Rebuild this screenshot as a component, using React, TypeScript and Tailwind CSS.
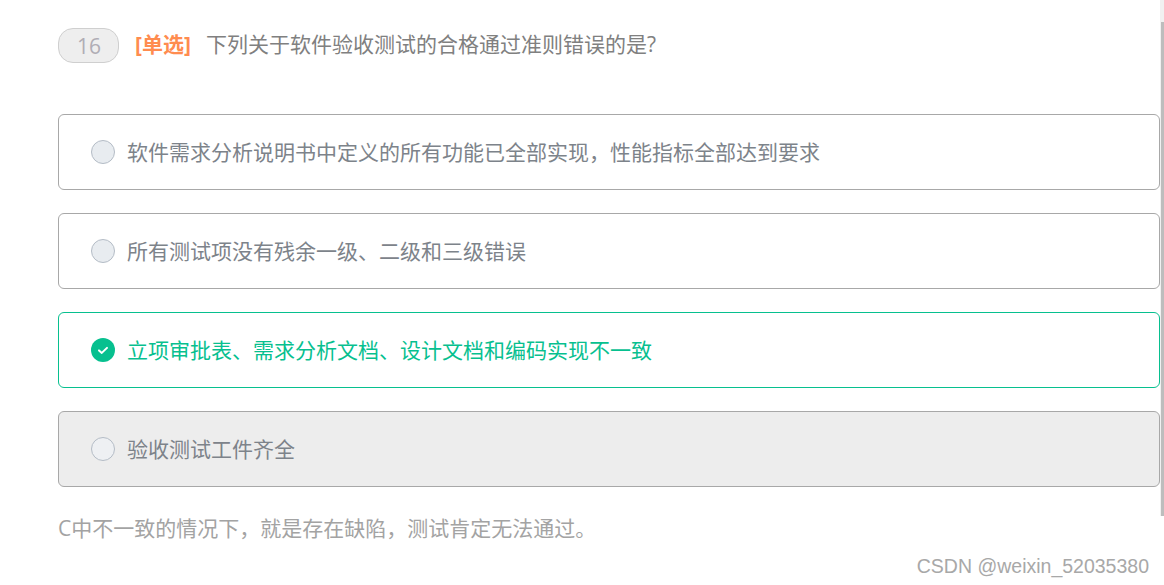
import React from 'react';

const cjk = "font-['Open_Sans','Noto_Sans_CJK_SC',sans-serif]";

function Radio({ checked, dim }: { checked?: boolean; dim?: boolean }) {
  if (checked) {
    return (
      <span className="flex h-6 w-6 shrink-0 items-center justify-center rounded-full bg-[#07c08f]">
        <svg width="14" height="14" viewBox="0 0 14 14" fill="none">
          <path d="M3 7.4 5.8 9.9 11 4.9" stroke="#fff" strokeWidth="2" strokeLinecap="round" strokeLinejoin="round" />
        </svg>
      </span>
    );
  }
  return (
    <span className={`h-6 w-6 shrink-0 rounded-full border border-[#b4bcc6] ${dim ? 'bg-[#eef0f3]' : 'bg-[#e8ecf0]'}`}></span>
  );
}

function Option({ text, state }: { text: string; state?: 'right' | 'muted' }) {
  const box =
    state === 'right'
      ? 'border-[#07c08f] text-[#07c08f]'
      : state === 'muted'
        ? 'border-[#a8a8a8] bg-[#ededed] text-[#7d838a]'
        : 'border-[#a8a8a8] text-[#7d838a]';
  return (
    <div className={`flex h-[76px] items-center gap-[12px] rounded-md border pl-[32px] ${box}`}>
      <Radio checked={state === 'right'} dim={state === 'muted'} />
      <span className="text-[21px] leading-none">{text}</span>
    </div>
  );
}

export default function App() {
  return (
    <div className={`relative h-[585px] w-[1164px] overflow-hidden bg-white pl-[58px] pr-[4px] pt-[28px] ${cjk}`}>
      {/* Question header */}
      <div className="flex h-[35px] items-center">
        <span className="flex h-[35px] w-[61px] items-center justify-center rounded-[15px] border border-[#cfcfcf] bg-[#eeeeee] pl-[1px] pt-[2px] text-[21px] font-medium text-[#b0adb5]">
          16
        </span>
        <span className="mb-[2px] ml-[16px] text-[21px] font-bold text-[#ff8c4f]">[单选]</span>
        <span className="mb-[2px] ml-[15px] text-[21px] text-[#808080]">下列关于软件验收测试的合格通过准则错误的是?</span>
      </div>

      <div className="mt-[51px] flex flex-col gap-[23px]">
        <Option text="软件需求分析说明书中定义的所有功能已全部实现，性能指标全部达到要求" />
        <Option text="所有测试项没有残余一级、二级和三级错误" />
        <Option text="立项审批表、需求分析文档、设计文档和编码实现不一致" state="right" />
        <Option text="验收测试工件齐全" state="muted" />
      </div>

      <p className="mt-[26px] text-[21px] leading-[30px] text-[#a3a3a3]">C中不一致的情况下，就是存在缺陷，测试肯定无法通过。</p>

      {/* Scrollbar */}
      <div className="absolute right-0 top-0 h-[516px] w-[4px] bg-[#f1f1f1]">
        <div className="ml-[1px] mt-[22px] h-[494px] w-[3px] bg-[#bdbdbd]"></div>
      </div>

      {/* Watermark */}
      <span className="absolute right-[15px] top-[553px] font-['Liberation_Sans',sans-serif] text-[19.5px] leading-[26px] text-[#a8a8a8]">
        CSDN @weixin_52035380
      </span>
    </div>
  );
}
